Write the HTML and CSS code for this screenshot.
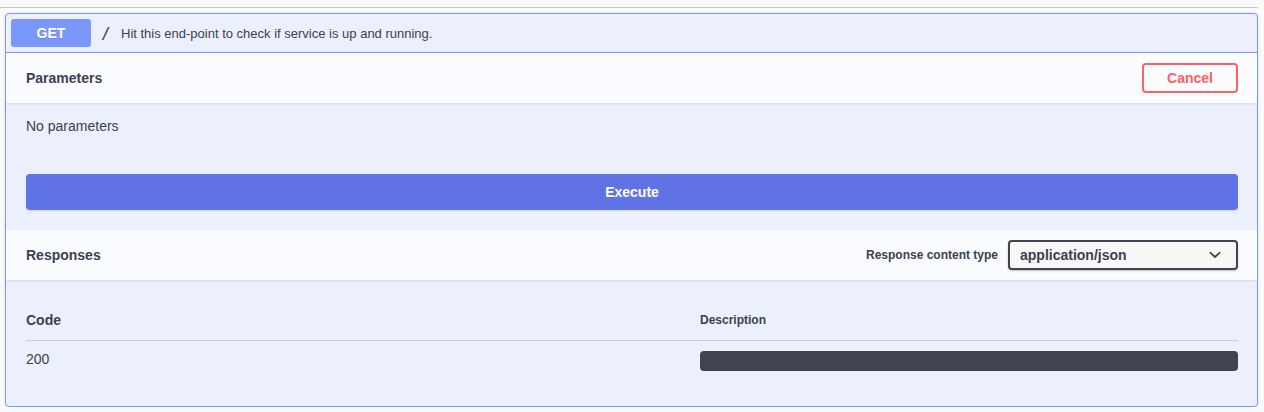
FILE: index.html
```html
<!DOCTYPE html>
<html>
<head>
<meta charset="utf-8">
<link rel="stylesheet" href="styles.css">
</head>
<body>
<div class="rule"></div>
<div class="opblock">
  <div class="summary">
    <span class="method">GET</span>
    <span class="path">/</span>
    <span class="summary-desc">Hit this end-point to check if service is up and running.</span>
  </div>
  <div class="section-header">
    <h4 class="section-title">Parameters</h4>
    <button class="btn-cancel">Cancel</button>
  </div>
  <div class="params-body">
    <p>No parameters</p>
  </div>
  <div class="execute-wrapper">
    <button class="btn-execute">Execute</button>
  </div>
  <div class="section-header">
    <h4 class="section-title">Responses</h4>
    <div class="content-type">
      <span class="ct-label">Response content type</span>
      <div class="select">
        <span>application/json</span>
        <svg width="12" height="8" viewBox="0 0 12 8"><path d="M1.5 1.8 L6 6 L10.5 1.8" fill="none" stroke="#3b4151" stroke-width="1.8" stroke-linecap="round" stroke-linejoin="round"/></svg>
      </div>
    </div>
  </div>
  <div class="responses-inner">
    <div class="resp-table">
      <div class="resp-head">
        <div class="col-code th-code">Code</div>
        <div class="col-desc th-desc">Description</div>
      </div>
      <div class="resp-row">
        <div class="col-code td-code">200</div>
        <div class="col-desc"><div class="desc-bar"></div></div>
      </div>
    </div>
  </div>
</div>
</body>
</html>
```
FILE: styles.css
```css
* { box-sizing: border-box; }
body {
  margin: 0;
  background: #fafafa;
  font-family: "Liberation Sans", Arial, sans-serif;
  color: #3b4151;
}
.rule {
  margin: 7px 6px 0 0;
  border-top: 1px solid #c9c9c9;
}
.opblock {
  margin: 5px 6px 0 5px;
  border: 1px solid #7b97fa;
  border-radius: 4px;
  background: #ecf0fc;
  box-shadow: 0 0 3px rgba(0,0,0,.12);
  overflow: hidden;
}
.summary {
  display: flex;
  align-items: center;
  padding: 5px;
  border-bottom: 1px solid #7b97fa;
}
.method {
  width: 80px;
  height: 28px;
  border-radius: 3px;
  background: #7b97fa;
  color: #fff;
  font-weight: bold;
  font-size: 14px;
  display: flex;
  align-items: center;
  justify-content: center;
  text-shadow: 0 1px 0 rgba(0,0,0,.1);
}
.path {
  font-family: "DejaVu Sans Mono", monospace;
  font-size: 16px;
  padding: 0 10px 0 10px;
  color: #3b4151;
  width: 30px;
}
.summary-desc {
  font-size: 13px;
  color: #3b4151;
}
.section-header {
  display: flex;
  align-items: center;
  justify-content: space-between;
  min-height: 50px;
  padding: 0 19px 0 20px;
  background: rgba(255,255,255,.8);
  box-shadow: 0 1px 2px rgba(0,0,0,.1);
}
.section-title {
  margin: 0;
  font-size: 14px;
  font-weight: bold;
}
.btn-cancel {
  width: 96px;
  height: 30px;
  border: 2px solid #ff6060;
  border-radius: 4px;
  background: transparent;
  color: #ff6060;
  font-family: "Liberation Sans", Arial, sans-serif;
  font-size: 14px;
  font-weight: bold;
  padding: 0;
}
.params-body {
  padding: 14px 20px 0;
}
.params-body p {
  margin: 0;
  font-size: 14px;
  line-height: 18px;
}
.execute-wrapper {
  padding: 39px 19px 20px 20px;
}
.btn-execute {
  display: block;
  width: 100%;
  height: 36px;
  border: none;
  border-radius: 4px;
  background: #5f72e6;
  color: #fff;
  font-family: "Liberation Sans", Arial, sans-serif;
  font-size: 14px;
  font-weight: bold;
  box-shadow: 0 1px 2px rgba(0,0,0,.1);
}
.content-type {
  display: flex;
  align-items: center;
  gap: 10px;
}
.ct-label {
  font-size: 12px;
  font-weight: bold;
}
.select {
  width: 230px;
  height: 30px;
  border: 2px solid #41444e;
  border-radius: 4px;
  background: #f7f7f7;
  display: flex;
  align-items: center;
  justify-content: space-between;
  padding: 0 15px 0 10px;
  font-size: 14px;
  font-weight: bold;
  box-shadow: 0 1px 2px rgba(0,0,0,.25);
}
.responses-inner {
  padding: 20px 19px 25px 20px;
}
.resp-head, .resp-row {
  display: flex;
}
.resp-head {
  border-bottom: 1px solid #c8ccd8;
}
.col-code { width: 674px; }
.col-desc { flex: 1; }
.th-code, .th-desc {
  padding: 12px 0;
  font-weight: bold;
  line-height: 16px;
}
.th-code { font-size: 14px; }
.th-desc { font-size: 12px; }
.resp-row > div { padding: 10px 0; }
.td-code {
  font-size: 14px;
  line-height: 16px;
}
.desc-bar {
  height: 20px;
  background: #41444e;
  border-radius: 4px;
}
```
